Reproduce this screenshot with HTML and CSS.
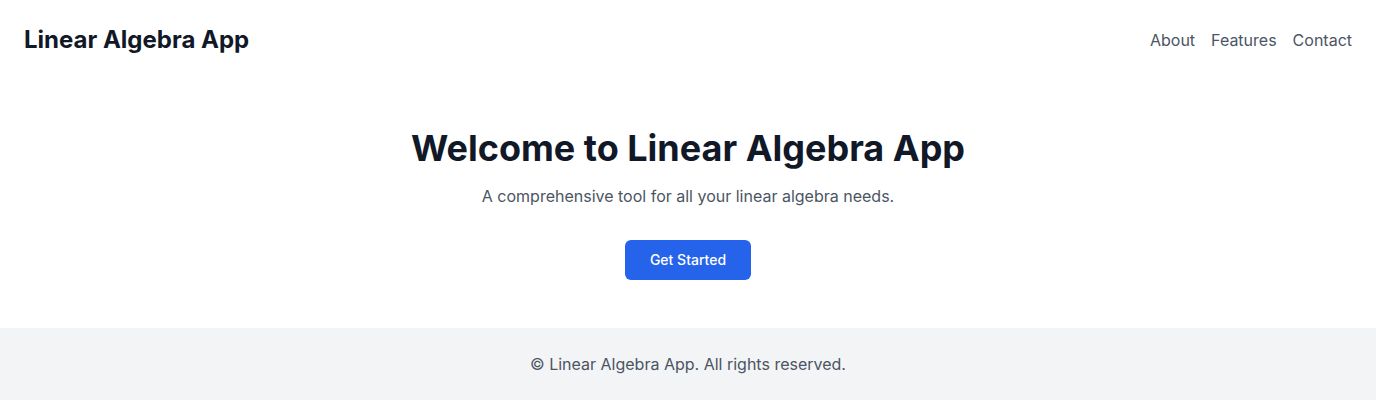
FILE: index.html
```html
<!DOCTYPE html>
<html lang="en">
<head>
<meta charset="utf-8">
<title>Linear Algebra App</title>
<link rel="stylesheet" href="styles.css">
</head>
<body>
<header class="header">
  <div class="brand">Linear Algebra App</div>
  <nav class="nav">
    <a href="#">About</a>
    <a href="#">Features</a>
    <a href="#">Contact</a>
  </nav>
</header>
<main class="hero">
  <h1 class="hero-title">Welcome to Linear Algebra App</h1>
  <p class="hero-text">A comprehensive tool for all your linear algebra needs.</p>
  <a class="btn" href="#">Get Started</a>
</main>
<footer class="footer">
  <p>© Linear Algebra App. All rights reserved.</p>
</footer>
</body>
</html>
```
FILE: styles.css
```css
* { box-sizing: border-box; }
html, body { margin: 0; padding: 0; }
body {
  font-family: Inter, "Noto Sans", sans-serif;
  background: #ffffff;
  color: #111827;
  font-size: 16px;
  line-height: 24px;
}
.header {
  display: flex;
  justify-content: space-between;
  align-items: center;
  padding: 24px;
  height: 80px;
}
.brand {
  font-size: 24px;
  line-height: 32px;
  font-weight: 700;
  color: #111827;
}
.nav {
  display: flex;
  gap: 16px;
}
.nav a {
  color: #4b5563;
  text-decoration: none;
  font-size: 16px;
  line-height: 24px;
}
.hero {
  display: flex;
  flex-direction: column;
  align-items: center;
  text-align: center;
  padding: 48px 0;
}
.hero-title {
  margin: 0;
  font-size: 36px;
  line-height: 40px;
  font-weight: 700;
  color: #111827;
}
.hero-text {
  margin: 16px 0 0;
  color: #4b5563;
  font-size: 16px;
  line-height: 24px;
}
.btn {
  margin-top: 32px;
  display: inline-flex;
  align-items: center;
  justify-content: center;
  width: 126px;
  height: 40px;
  background: #2563eb;
  color: #ffffff;
  border-radius: 6px;
  font-size: 14px;
  font-weight: 500;
  text-decoration: none;
}
.footer {
  background: #f3f4f6;
  padding: 24px 0;
  text-align: center;
}
.footer p {
  margin: 0;
  color: #4b5563;
  font-size: 16px;
  line-height: 24px;
}
```
